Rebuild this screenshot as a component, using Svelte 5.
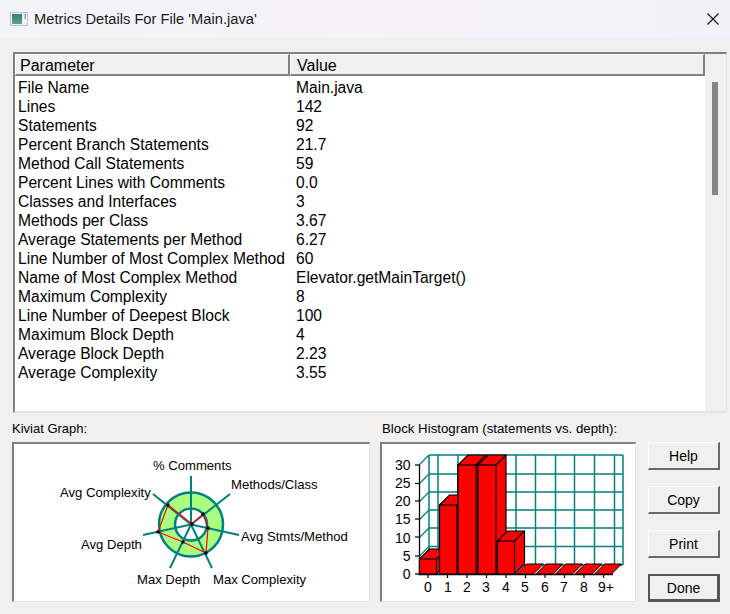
<script>
  const rows = [
    ['File Name', 'Main.java'], ['Lines', '142'], ['Statements', '92'],
    ['Percent Branch Statements', '21.7'], ['Method Call Statements', '59'],
    ['Percent Lines with Comments', '0.0'], ['Classes and Interfaces', '3'],
    ['Methods per Class', '3.67'], ['Average Statements per Method', '6.27'],
    ['Line Number of Most Complex Method', '60'], ['Name of Most Complex Method', 'Elevator.getMainTarget()'],
    ['Maximum Complexity', '8'], ['Line Number of Deepest Block', '100'],
    ['Maximum Block Depth', '4'], ['Average Block Depth', '2.23'], ['Average Complexity', '3.55']
  ];
  const buttons = ['Help', 'Copy', 'Print', 'Done'];

  // Kiviat: coordinates local to the box (box origin at 14,444)
  const ox = 14, oy = 444;
  const c = [191 - ox, 524.5 - oy];
  const spokes = [[191, 476], [230, 494], [239, 535], [212, 568], [170, 568], [143, 535], [153, 494]]
    .map(([x, y]) => [x - ox, y - oy]);
  const redPts = [[192, 524], [203, 514], [208, 528], [206, 553], [183, 542], [158, 532], [168, 505]]
    .map(([x, y]) => [x - ox, y - oy]);
  const kLabels = [
    ['% Comments', 153, 470], ['Methods/Class', 231, 489], ['Avg Stmts/Method', 241, 541],
    ['Max Complexity', 213, 584], ['Max Depth', 137, 584], ['Avg Depth', 81, 549], ['Avg Complexity', 60, 497]
  ];

  // Histogram: coordinates local to its box (box origin at 382,444)
  const hx = 382, hy = 444;
  const gridY = [455, 474, 492, 510, 528, 546.5, 565];
  const gridX = [429, 438, 458, 477, 496.5, 516, 535.5, 555.5, 574.5, 594.5, 614.5, 623];
  const ticks = [465, 483.5, 501, 519, 537, 556, 574];
  const xTicks = [428, 447.5, 467, 486.5, 506, 525.5, 545, 564.5, 584, 603.5];
  const tickLabels = ['0', '5', '10', '15', '20', '25', '30'];
  const bars = [[419.5, 436.5, 559], [439.5, 457, 505], [458, 476, 465], [478, 496, 465], [497.5, 514.5, 541]];
  const flats = [516.5, 536, 555.5, 575, 594.5];
  const xLabels = [['0', 428], ['1', 448], ['2', 467], ['3', 486], ['4', 506], ['5', 525], ['6', 545], ['7', 564], ['8', 584], ['9+', 606]];
  const d = 10;
</script>

<div class="window">
  <header class="titlebar">
    <svg class="appicon" width="18" height="14" viewBox="0 0 18 14" aria-hidden="true">
      <defs>
        <linearGradient id="ic" x1="0" y1="0" x2="0" y2="1">
          <stop offset="0" stop-color="#2f7a96"/>
          <stop offset="1" stop-color="#5fa67c"/>
        </linearGradient>
      </defs>
      <rect x="0.5" y="0.5" width="17" height="13" fill="#f1f3f4" stroke="#bcc3c8"/>
      <rect x="2" y="2" width="10" height="10" fill="url(#ic)"/>
      <rect x="14.5" y="2" width="1.5" height="5" fill="#7fa6a4"/>
    </svg>
    <span class="title">Metrics Details For File 'Main.java'</span>
    <svg class="close" width="12" height="12" viewBox="0 0 12 12" aria-hidden="true">
      <path d="M0.5 0.5 L11.5 11.5 M11.5 0.5 L0.5 11.5" stroke="#111" stroke-width="1.1" fill="none"/>
    </svg>
  </header>

  <main class="content">
    <section class="table">
      <div class="list">
        <div class="head">
          <div class="hcell hparam">Parameter</div>
          <div class="hcell hvalue">Value</div>
        </div>
        <div class="rows">
          {#each rows as r}
            <div class="row"><span class="p">{r[0]}</span><span class="v">{r[1]}</span></div>
          {/each}
        </div>
      </div>
      <div class="scroll"><div class="thumb"></div></div>
    </section>

    <section class="bottom">
      <div class="panel kiviat">
        <div class="caption kcap">Kiviat Graph:</div>
        <div class="box">
          <svg width="355" height="155" viewBox="0 0 355 155">
            <circle cx={c[0]} cy={c[1]} r="32" fill="#aaff80" stroke="#008080" stroke-width="2.5"/>
            <circle cx={c[0]} cy={c[1]} r="16" fill="#fff" stroke="#008080" stroke-width="2.5"/>
            {#each spokes as s}
              <line x1={c[0]} y1={c[1]} x2={s[0]} y2={s[1]} stroke="#008080" stroke-width="2"/>
            {/each}
            <polygon points={redPts.map(p => p.join(',')).join(' ')} fill="none" stroke="#f00" stroke-width="1.2"/>
            {#each redPts as p}
              <rect x={p[0] - 1.5} y={p[1] - 1.5} width="3" height="3" fill="#000"/>
            {/each}
            {#each kLabels as l}
              <text x={l[1] - ox} y={l[2] - oy} class="ktext">{l[0]}</text>
            {/each}
          </svg>
        </div>
      </div>

      <div class="panel hist">
        <div class="caption hcap">Block Histogram (statements vs. depth):</div>
        <div class="box">
          <svg width="251" height="155" viewBox="0 0 251 155">
            <g transform="translate({-hx} {-hy})">
              {#each gridY as y}
                <line x1="429" x2="623" y1={y} y2={y} stroke="#008080" stroke-width="1.5"/>
                <line x1="419" x2="429" y1={y + 10} y2={y} stroke="#008080" stroke-width="1.2"/>
              {/each}
              {#each gridX as x}
                <line x1={x} x2={x} y1="455" y2="565" stroke="#008080" stroke-width="1.5"/>
              {/each}
              <line x1="419.5" x2="419.5" y1="465" y2="575" stroke="#000" stroke-width="1.3"/>
              <line x1="419" x2="613" y1="574.5" y2="574.5" stroke="#000" stroke-width="1.3"/>
              {#each ticks as y}
                <line x1="415" x2="419.5" y1={y} y2={y} stroke="#000" stroke-width="1.2"/>
              {/each}
              {#each xTicks as x}
                <line x1={x} x2={x} y1="574.5" y2="578" stroke="#000" stroke-width="1.2"/>
              {/each}
              {#each flats as x}
                <polygon points="{x},574 {x + 17},574 {x + 27},564 {x + 10},564" fill="#f00" stroke="#000" stroke-width="1"/>
              {/each}
              {#each bars as b}
                <polygon points="{b[0]},{b[2]} {b[0] + d},{b[2] - d} {b[1] + d},{b[2] - d} {b[1] + d},{564} {b[1]},574 {b[0]},574" fill="#f00" stroke="#000" stroke-width="1.2"/>
                <rect x={b[0]} y={b[2]} width={b[1] - b[0]} height={574 - b[2]} fill="#f00" stroke="#000" stroke-width="1.2"/>
                <line x1={b[1]} y1={b[2]} x2={b[1] + d} y2={b[2] - d} stroke="#000" stroke-width="1.2"/>
              {/each}
              {#each tickLabels as t, i}
                <text x="410.5" y={574 - i * 18.17 + 5} text-anchor="end" class="ntext">{t}</text>
              {/each}
              {#each xLabels as l}
                <text x={l[1]} y="592" text-anchor="middle" class="ntext">{l[0]}</text>
              {/each}
            </g>
          </svg>
        </div>
      </div>

      <div class="buttons">
        {#each buttons as b}
          <button class:default={b === 'Done'}>{b}</button>
        {/each}
      </div>
    </section>
  </main>
</div>

<style>
  :global(body) {
    margin: 0;
    background: #f0f0f0;
  }
  .window {
    width: 730px;
    height: 614px;
    display: flex;
    flex-direction: column;
    background: #f0f0f0;
    font-family: "Liberation Sans", Arial, sans-serif;
    color: #000;
    overflow: hidden;
  }
  .titlebar {
    height: 38px;
    flex: none;
    display: flex;
    align-items: center;
    background: linear-gradient(90deg, #f3f4f7, #f5f2f8 50%, #f1f2f8);
    padding: 0 11px 0 10px;
  }
  .appicon { flex: none; }
  .title {
    margin-left: 6px;
    font-size: 14.7px;
    color: #1a1a1a;
    flex: 1;
  }
  .close { flex: none; }
  .content {
    flex: 1;
    display: flex;
    flex-direction: column;
    padding: 14px 3px 0 12px;
  }
  .table {
    height: 361px;
    box-sizing: border-box;
    margin-left: 1px;
    width: 714px;
    border-top: 2px solid #808080;
    border-left: 2px solid #808080;
    border-right: 1px solid #e3e3e3;
    border-bottom: 2px solid #e3e3e3;
    display: flex;
    background: #fff;
  }
  .list {
    flex: 1;
    min-width: 0;
    display: flex;
    flex-direction: column;
  }
  .head {
    height: 22px;
    flex: none;
    display: flex;
    background: #f0f0f0;
    font-size: 16px;
    line-height: 21px;
    box-sizing: border-box;
  }
  .hcell {
    box-sizing: border-box;
    border-right: 2px solid #808080;
    border-bottom: 2px solid #808080;
    border-top: 1px solid #fff;
    border-left: 1px solid #fff;
  }
  .hparam { width: 275px; padding-left: 4px; }
  .hvalue { flex: 1; padding-left: 6px; }
  .rows {
    padding: 2px 0 0 3px;
    font-size: 15.6px;
    line-height: 19px;
  }
  .row { display: flex; height: 19px; white-space: nowrap; }
  .p { width: 278px; flex: none; }
  .scroll {
    width: 21px;
    flex: none;
    background: #f0f0f0;
    padding: 28px 0 0 7px;
    box-sizing: border-box;
  }
  .thumb { width: 6px; height: 113px; background: #858585; }
  .bottom {
    display: flex;
    margin-top: 8px;
    align-items: flex-start;
  }
  .panel { display: flex; flex-direction: column; }
  .kiviat { width: 358px; }
  .hist { width: 256px; margin-left: 10px; }
  .caption {
    line-height: 15px;
    height: 21px;
  }
  .kcap { font-size: 13px; }
  .hcap { font-size: 13.28px; padding-left: 2px; }
  .box {
    box-sizing: border-box;
    height: 160px;
    background: #fff;
    border-top: 2px solid #808080;
    border-left: 2px solid #808080;
    border-right: 1px solid #e3e3e3;
    border-bottom: 1px solid #e3e3e3;
  }
  .box svg { display: block; }
  .ktext {
    font-family: "Liberation Sans", Arial, sans-serif;
    font-size: 13.1px;
    fill: #000;
  }
  .ntext {
    font-family: "Liberation Sans", Arial, sans-serif;
    font-size: 14px;
    fill: #000;
  }
  .buttons {
    margin-left: 12px;
    padding-top: 21px;
    display: flex;
    flex-direction: column;
    gap: 16px;
  }
  button {
    width: 72px;
    height: 28px;
    padding: 0;
    box-sizing: border-box;
    background: #f0f0f0;
    border-style: solid;
    border-width: 1px 2px 2px 1px;
    border-color: #fff #696969 #696969 #fff;
    font-family: "Liberation Sans", Arial, sans-serif;
    font-size: 14px;
    color: #000;
  }
  button.default {
    border: 2px solid #555;
    border-right-width: 3px;
    border-bottom-width: 3px;
  }
</style>
